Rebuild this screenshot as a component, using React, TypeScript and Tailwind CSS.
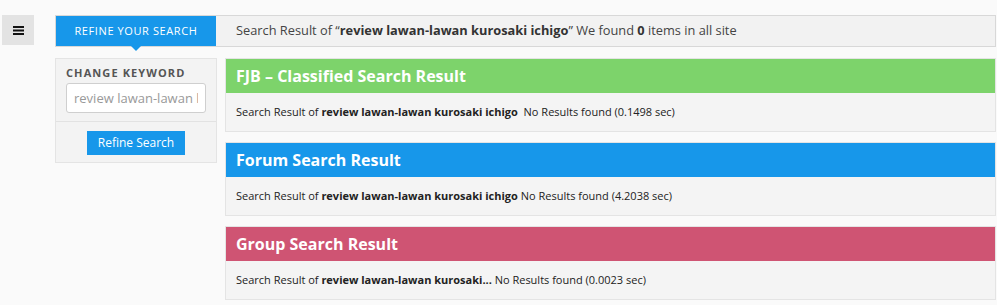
import type { ReactNode } from 'react'

type Result = {
  title: string
  color: string
  keyword: string
  tail: ReactNode
}

const results: Result[] = [
  {
    title: 'FJB – Classified Search Result',
    color: 'bg-[#7dd36b]',
    keyword: 'review lawan-lawan kurosaki ichigo',
    tail: <>&nbsp; No Results found (0.1498 sec)</>,
  },
  {
    title: 'Forum Search Result',
    color: 'bg-[#1797ea]',
    keyword: 'review lawan-lawan kurosaki ichigo',
    tail: <> No Results found (4.2038 sec)</>,
  },
  {
    title: 'Group Search Result',
    color: 'bg-[#cf5473]',
    keyword: 'review lawan-lawan kurosaki...',
    tail: <> No Results found (0.0023 sec)</>,
  },
]

/** One colored result block: title strip + a single summary line. */
function ResultPanel({ title, color, keyword, tail }: Result) {
  return (
    <div className="border border-[#e4e4e4] bg-[#f4f4f4]">
      <div className={`${color} flex h-[34px] items-center px-[10px]`}>
        <h2 className="text-[16px] font-bold text-white">{title}</h2>
      </div>
      <div className="flex h-[38px] items-center px-[10px] text-[11px] text-[#222]">
        <p>
          Search Result of <b>{keyword}</b>
          {tail}
        </p>
      </div>
    </div>
  )
}

export default function App() {
  return (
    <div className="flex min-h-[305px] bg-[#fafafa] pl-[2px] pt-[15px] font-['Open_Sans',sans-serif]">
      {/* menu toggle */}
      <button className="flex h-[30px] w-[32px] items-center justify-center bg-[#e3e3e3]">
        <svg width="11" height="9" viewBox="0 0 11 9">
          <rect x="0" y="0" width="11" height="2" fill="#111" />
          <rect x="0" y="3.5" width="11" height="2" fill="#111" />
          <rect x="0" y="7" width="11" height="2" fill="#111" />
        </svg>
      </button>

      <div className="ml-[21px] w-[941px]">
        {/* summary bar */}
        <div className="flex h-[32px] items-stretch border border-[#d8d8d8] bg-[#f2f2f2]">
          <div className="relative flex w-[160px] items-center justify-center bg-[#1797ea] text-[11px] tracking-[0.6px] text-white">
            REFINE YOUR SEARCH
            <span className="absolute left-1/2 top-full -ml-[5px] h-0 w-0 border-x-[5px] border-t-[5px] border-x-transparent border-t-[#1797ea]" />
          </div>
          <p className="flex items-center pl-[20px] text-[12.8px] text-[#444]">
            Search Result of “<b className="text-[#333]">review lawan-lawan kurosaki ichigo</b>” We found&nbsp;<b className="text-[#333]">0</b>&nbsp;items in all site
          </p>
        </div>

        <div className="mt-[11px] flex gap-[8px]">
          {/* sidebar */}
          <aside className="h-[105px] w-[162px] shrink-0 border border-[#e4e4e4] bg-[#f3f3f3]">
            <div className="px-[10px] pt-[6px]">
              <h3 className="text-[11px] font-bold leading-[16px] tracking-[1.1px] text-[#555]">CHANGE KEYWORD</h3>
              <input
                readOnly
                value="review lawan-lawan kurosaki ichigo"
                className="mt-[2px] h-[30px] w-full rounded-[3px] border border-[#cfcfcf] bg-white px-[7px] text-[13px] text-[#999] outline-none"
              />
            </div>
            <div className="mt-[8px] flex justify-center border-t border-[#e2e2e2] pt-[9px]">
              <button className="h-[24px] w-[98px] bg-[#1797ea] text-[12px] text-white">Refine Search</button>
            </div>
          </aside>

          {/* results */}
          <div className="flex flex-1 flex-col gap-[10px]">
            {results.map((r) => (
              <ResultPanel key={r.title} {...r} />
            ))}
          </div>
        </div>
      </div>
    </div>
  )
}
